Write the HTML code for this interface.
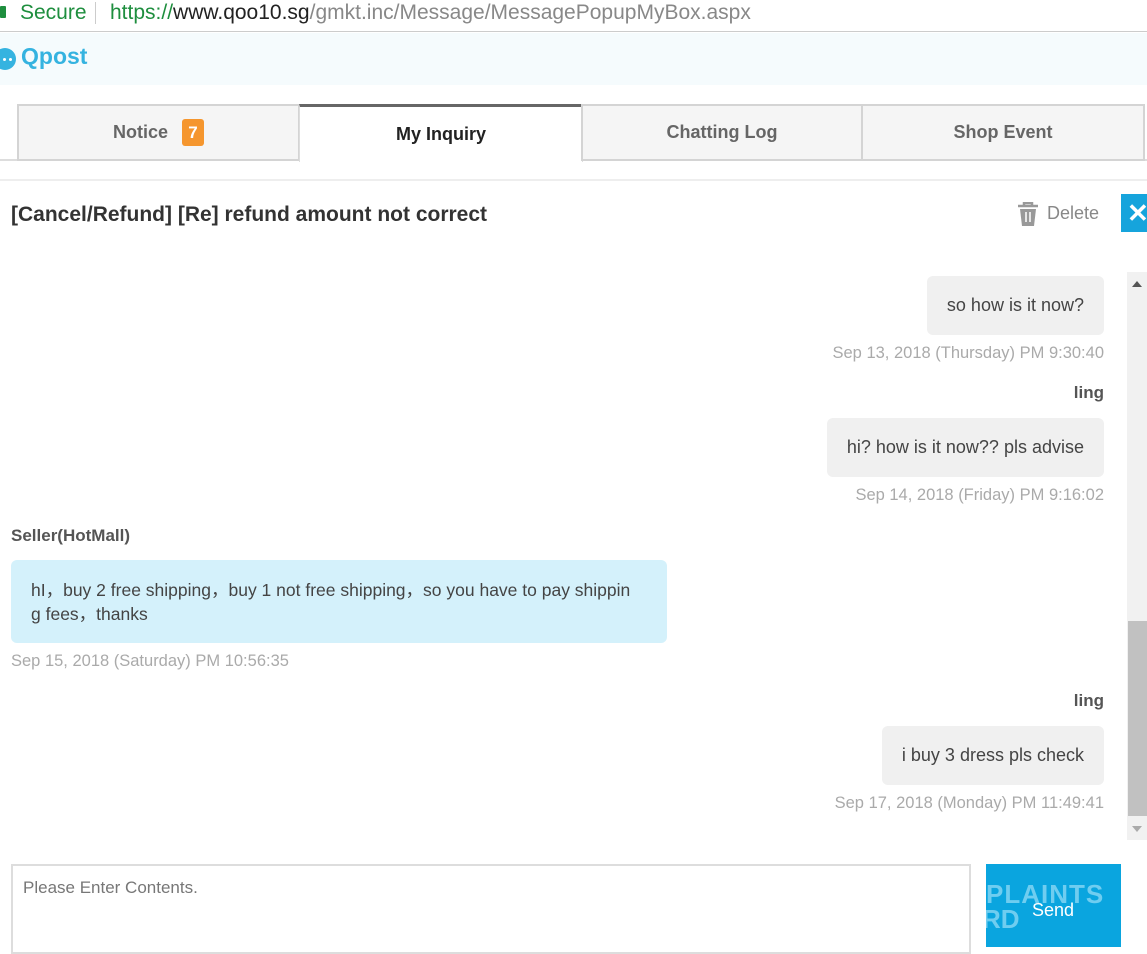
<!DOCTYPE html>
<html><head><meta charset="utf-8"><style>
*{margin:0;padding:0;box-sizing:border-box}
body{width:1147px;height:947px;overflow:hidden;background:#fff;font-family:"Liberation Sans",Arial,sans-serif;position:relative}
.a{position:absolute}
.tab{position:absolute;top:104px;height:57px;background:#f5f5f5;border:2px solid #d4d4d4;font-weight:bold;font-size:18px;color:#666;display:flex;align-items:center;justify-content:center}
.bub{position:absolute;background:#f0f0f0;border-radius:6px;font-size:18px;color:#444;padding:0 20px;display:flex;align-items:center;white-space:nowrap}
.br{right:43px;height:59px}
.ts{position:absolute;font-size:16.5px;color:#aaa;white-space:nowrap}
.tr{right:43px}
.nm{position:absolute;font-size:17px;font-weight:bold;color:#555}
</style></head><body>
<div class="a" style="left:0;top:0;width:1147px;height:32px;border-bottom:1px solid #ccc;font-size:21px;line-height:25px;">
<div class="a" style="left:0;top:6px;width:6px;height:12px;background:#1e8e3e;border-radius:1px"></div>
<span class="a" style="left:20px;top:0;color:#1e8e3e">Secure</span>
<div class="a" style="left:95px;top:2px;width:1px;height:22px;background:#ccc"></div>
<span class="a" style="left:110px;top:0;color:#1e8e3e">https://<span style="color:#222">www.qoo10.sg</span><span style="color:#888">/gmkt.inc/Message/MessagePopupMyBox.aspx</span></span>
</div>
<div class="a" style="left:0;top:33px;width:1147px;height:52px;background:#f5fbfd"></div>
<div class="a" style="left:-6px;top:48px;width:22px;height:22px;border-radius:50%;background:#35b3e0"></div>
<div class="a" style="left:3px;top:58px;width:3px;height:3px;background:#fff;border-radius:50%;box-shadow:6px 0 #fff"></div>
<div class="a" style="left:21px;top:43px;font-size:23px;font-weight:bold;color:#35b3e0">Qpost</div>
<div class="a" style="left:0;top:159px;width:1147px;height:2px;background:#ddd"></div>
<div class="a" style="left:0;top:179px;width:1147px;height:2px;background:#eee"></div>
<div class="tab" style="left:17px;width:283px">Notice <span style="display:inline-block;margin-left:14px;background:#f5962e;color:#fff;border-radius:3px;width:22px;height:27px;line-height:27px;text-align:center;font-size:17px">7</span></div>
<div class="tab" style="left:299px;width:284px;background:#fff;border:none;border-top:3px solid #666;border-left:1px solid #ddd;border-right:1px solid #ddd;color:#222;height:58px">My Inquiry</div>
<div class="tab" style="left:581px;width:282px">Chatting Log</div>
<div class="tab" style="left:861px;width:284px">Shop Event</div>
<div class="a" style="left:11px;top:203px;font-size:21px;font-weight:bold;color:#333">[Cancel/Refund] [Re] refund amount not correct</div>
<svg class="a" style="left:1016px;top:202px" width="24" height="24" viewBox="0 0 24 24"><path d="M2 4h20M8 4V1h8v3" stroke="#999" stroke-width="2.5" fill="none"/><path d="M4 7h16l-2 17H6z" fill="#999"/><path d="M10 10v10M14 10v10" stroke="#fff" stroke-width="1.5"/></svg>
<div class="a" style="left:1047px;top:203px;font-size:18px;color:#888">Delete</div>
<div class="a" style="left:1121px;top:194px;width:26px;height:38px;background:#16a4dc;color:#fff;font-size:26px;font-weight:bold;line-height:38px;padding-left:6px">✕</div>
<div class="a" style="left:1127px;top:272px;width:20px;height:568px;background:#f1f1f1"></div>
<div class="a" style="left:1128px;top:621px;width:19px;height:195px;background:#c1c1c1"></div>
<div class="a" style="left:1132px;top:281px;border:5px solid transparent;border-bottom:6px solid #555;border-top:0"></div>
<div class="a" style="left:1132px;top:826px;border:5px solid transparent;border-top:6px solid #aaa;border-bottom:0"></div>
<div class="bub br" style="top:276px">so how is it now?</div>
<div class="ts tr" style="top:344px">Sep 13, 2018 (Thursday) PM 9:30:40</div>
<div class="nm" style="right:43px;top:383px">ling</div>
<div class="bub br" style="top:418px">hi? how is it now?? pls advise</div>
<div class="ts tr" style="top:486px">Sep 14, 2018 (Friday) PM 9:16:02</div>
<div class="nm" style="left:11px;top:526px">Seller(HotMall)</div>
<div class="bub" style="left:11px;top:560px;width:656px;height:83px;background:#d4f1fb;line-height:24px;white-space:normal;font-size:17.5px">hI，buy 2 free shipping，buy 1 not free shipping，so you have to pay shippin<br>g fees，thanks</div>
<div class="ts" style="left:11px;top:652px">Sep 15, 2018 (Saturday) PM 10:56:35</div>
<div class="nm" style="right:43px;top:691px">ling</div>
<div class="bub br" style="top:726px">i buy 3 dress pls check</div>
<div class="ts tr" style="top:794px">Sep 17, 2018 (Monday) PM 11:49:41</div>
<div class="a" style="left:11px;top:864px;width:960px;height:90px;border:2px solid #ddd;font-size:17px;color:#777;padding:12px 10px">Please Enter Contents.</div>
<div class="a" style="left:986px;top:864px;width:135px;height:83px;background:#0aa5df;overflow:hidden">
<div class="a" style="left:0;top:15px;font-size:26px;font-weight:bold;color:#6fcdf0;letter-spacing:1px">PLAINTS</div>
<div class="a" style="left:-4px;top:40px;font-size:26px;font-weight:bold;color:#6fcdf0">RD</div>
<div class="a" style="left:46px;top:36px;font-size:18px;color:#fff">Send</div>
</div>
</body></html>
